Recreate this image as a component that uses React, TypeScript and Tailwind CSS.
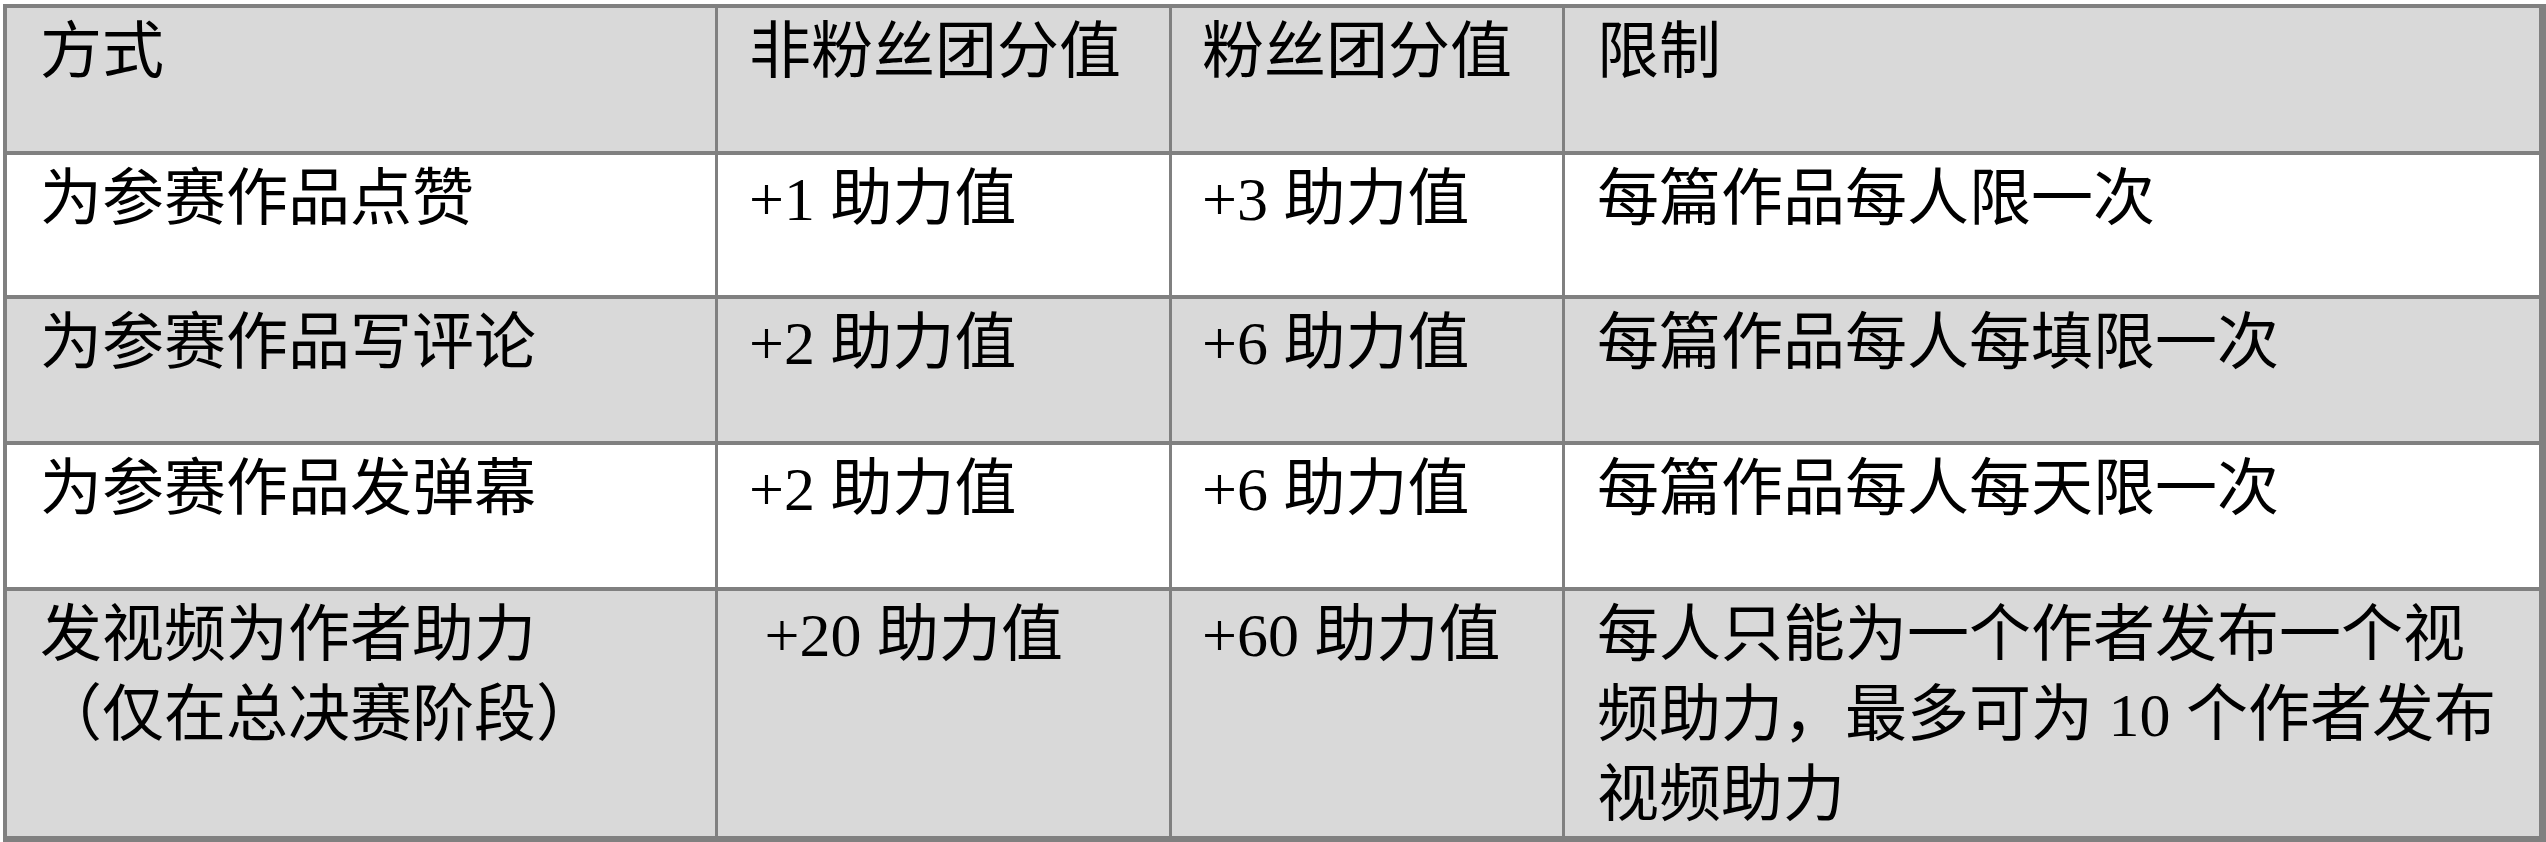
import React from "react";

const font = {
  fontFamily: '"Liberation Serif", "Noto Sans CJK SC", serif',
};

type Cell = { text: React.ReactNode; pl: string };

const rows: { bg: string; cells: React.ReactNode[] }[] = [
  { bg: "bg-[#d9d9d9]", cells: ["方式", "非粉丝团分值", "粉丝团分值", "限制"] },
  { bg: "bg-white", cells: ["为参赛作品点赞", "+1 助力值", "+3 助力值", "每篇作品每人限一次"] },
  { bg: "bg-[#d9d9d9]", cells: ["为参赛作品写评论", "+2 助力值", "+6 助力值", "每篇作品每人每填限一次"] },
  { bg: "bg-white", cells: ["为参赛作品发弹幕", "+2 助力值", "+6 助力值", "每篇作品每人每天限一次"] },
  {
    bg: "bg-[#d9d9d9]",
    cells: [
      <>
        发视频为作者助力
        <br />
        （仅在总决赛阶段）
      </>,
      <>{"\u00a0+20 助力值"}</>,
      "+60 助力值",
      <>
        每人只能为一个作者发布一个视
        <br />
        频助力，最多可为 10 个作者发布
        <br />
        视频助力
      </>,
    ],
  },
];

const pads = ["pl-[33px]", "pl-[31px]", "pl-[30px]", "pl-[32px]"];

export default function App() {
  return (
    <div className="bg-white pt-[4px] pl-[3px] w-[2546px] h-[842px] overflow-hidden" style={font}>
      <div className="grid grid-cols-[708px_451px_390px_974px] grid-rows-[143px_140px_142px_142px_245px] gap-x-[3px] gap-y-[4px] bg-[#808080] border-t-4 border-l-4 border-r-[7px] border-b-[6px] border-[#808080] w-[2543px]">
        {rows.map((r, ri) =>
          r.cells.map((c, ci) => (
            <div
              key={`${ri}-${ci}`}
              className={`${r.bg} ${pads[ci]} pt-[4px] text-[62px] leading-[80px] text-black whitespace-nowrap`}
            >
              {c}
            </div>
          ))
        )}
      </div>
    </div>
  );
}
